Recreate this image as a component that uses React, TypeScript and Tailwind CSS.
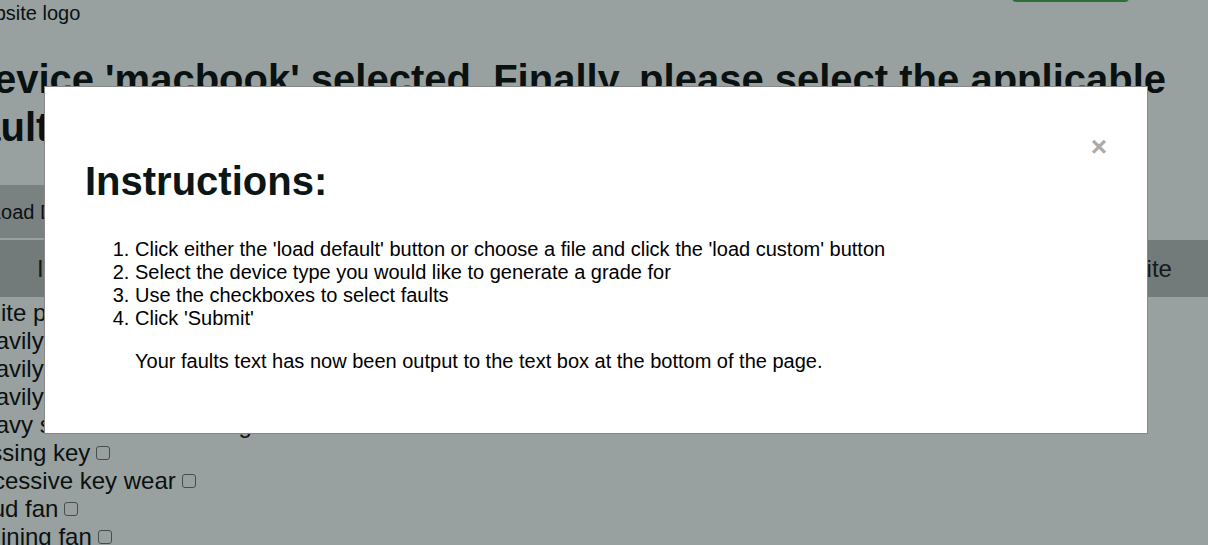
import React from "react";

const rows = [
  "White pixels",
  "Heavily scratched screen",
  "Heavily dented casing",
  "Heavily worn keyboard",
  "Heavy scratches on casing",
  "Missing key",
  "Excessive key wear",
  "Loud fan",
  "Whining fan",
  "Broken hinge",
];

export default function App() {
  return (
    <div
      className="relative w-[1208px] h-[545px] overflow-hidden bg-white text-[#111]"
      style={{ fontFamily: '"Liberation Sans", Arial, sans-serif' }}
    >
      {/* page content, scrolled */}
      <div className="-ml-[35px] -mt-[40px] w-[1260px]">
        <header className="flex items-start justify-between">
          <span className="mt-[42px] text-[20px] leading-[23px]">Website logo</span>
          <button className="mr-[96px] h-[42px] w-[117px] rounded-[4px] bg-[#4caf50] text-[18px] text-white">
            Logout
          </button>
        </header>

        <h1 className="mt-[30px] text-[40px] font-bold leading-[48px]">
          Device 'macbook' selected. Finally, please select the applicable faults
        </h1>

        <div className="mt-[34px] flex h-[53px] w-[700px] items-center gap-4 bg-[#cccccc] pl-[25px] text-[20px]">
          <span>Load Default</span>
          <span>Choose file</span>
          <span>Load Custom</span>
        </div>

        <nav className="mt-[2px] flex h-[57px] items-center justify-between bg-[#c0c0c0] pl-[72px] pr-[53px] text-[24px] text-[#222]">
          <span>Instructions</span>
          <span>Faults</span>
          <span>Grades</span>
          <span>Composite</span>
        </nav>

        <div className="mt-[2px] flex flex-col text-[24px]">
          {rows.map((r) => (
            <label key={r} className="flex h-[28px] items-center">
              <span>{r}</span>
              <input
                type="checkbox"
                className="ml-[6px] h-[14px] w-[14px] appearance-none rounded-[3px] border border-[#767676] bg-white"
              />
            </label>
          ))}
        </div>
      </div>

      {/* modal overlay */}
      <div className="absolute inset-0 bg-[rgba(0,17,17,0.4)]">
        <div className="ml-[44px] mt-[86px] w-[1104px] border border-[#888] bg-white px-[40px] pb-[60px] pt-[70px]">
          <div className="flex items-start justify-between">
            <h1 className="text-[40px] font-bold leading-[48px] text-[#0b1616]">Instructions:</h1>
            <span className="-mt-[24px] text-[28px] font-bold leading-[28px] text-[#aaa]">×</span>
          </div>
          <ol className="mt-[33px] list-decimal pl-[50px] text-[20px] leading-[23px] text-black">
            <li>Click either the 'load default' button or choose a file and click the 'load custom' button</li>
            <li>Select the device type you would like to generate a grade for</li>
            <li>Use the checkboxes to select faults</li>
            <li>Click 'Submit'</li>
          </ol>
          <p className="mt-[20px] pl-[50px] text-[20px] leading-[23px] text-black">
            Your faults text has now been output to the text box at the bottom of the page.
          </p>
        </div>
      </div>
    </div>
  );
}
